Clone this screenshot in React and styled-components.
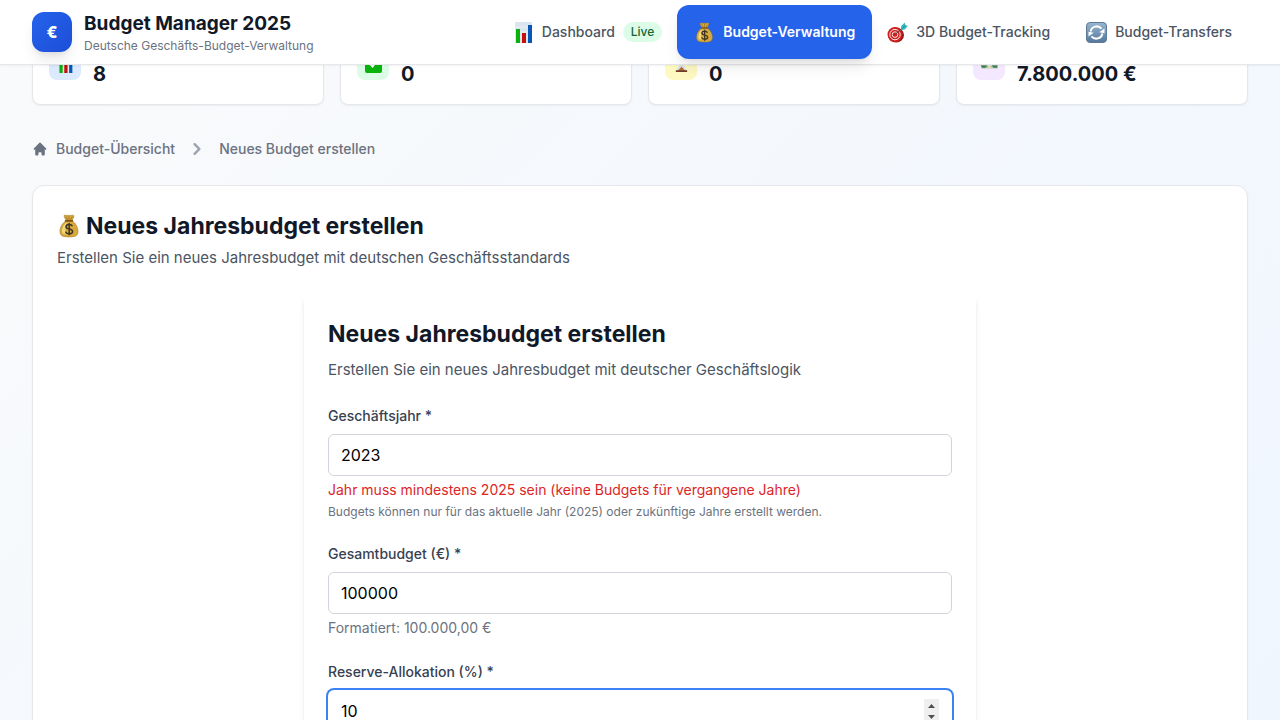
import React, { useEffect, useRef, useState } from "react";
import styled, { createGlobalStyle, css } from "styled-components";

const GlobalStyle = createGlobalStyle`
  *, *::before, *::after { box-sizing: border-box; }
  html { scrollbar-width: none; }
  body {
    margin: 0;
    font-family: Inter, "Liberation Sans", sans-serif;
    font-size: 16px;
    line-height: 24px;
    color: #111827;
    background: #f8fafc;
    -webkit-font-smoothing: antialiased;
  }
  h1, h2, p { margin: 0; }
  a { color: inherit; text-decoration: none; }
`;

const Page = styled.div`
  min-height: 100vh;
  background: linear-gradient(135deg, #f9fafb 0%, #eff6ff 100%);
`;

const Header = styled.header`
  position: sticky;
  top: 0;
  z-index: 10;
  display: flex;
  align-items: center;
  justify-content: space-between;
  height: 65px;
  padding: 0 32px;
  background: #fff;
  border-bottom: 1px solid #e5e7eb;
  box-shadow: 0 1px 2px rgba(0, 0, 0, 0.05);
`;

const Brand = styled.a`
  display: flex;
  align-items: center;
  gap: 12px;
`;

const Logo = styled.span`
  display: flex;
  align-items: center;
  justify-content: center;
  width: 40px;
  height: 40px;
  border-radius: 12px;
  background: linear-gradient(135deg, #2563eb, #1d4ed8);
  box-shadow: 0 10px 15px -3px rgba(0, 0, 0, 0.1), 0 4px 6px -4px rgba(0, 0, 0, 0.1);
  color: #fff;
  font-size: 16px;
  font-weight: 800;
`;

const BrandName = styled.h1`
  font-size: 19px;
  line-height: 28px;
  font-weight: 700;
`;

const BrandNote = styled.p`
  font-size: 12px;
  line-height: 16px;
  color: #6b7280;
`;

const Nav = styled.nav`
  display: flex;
  align-items: center;
  gap: 4px;
`;

const NavLink = styled.a`
  display: flex;
  align-items: center;
  gap: 8px;
  height: 52px;
  padding: 0 16px;
  border-radius: 12px;
  color: #4b5563;
  font-size: 14px;
  font-weight: 500;
  white-space: nowrap;
  svg { width: 21px; height: 21px; }
  ${(p) => p.$active && css`
    height: 54px;
    margin: 0 -5px;
    padding: 0 17px;
    background: #2563eb;
    color: #fff;
    font-weight: 600;
    box-shadow: 0 10px 15px -3px rgba(0, 0, 0, 0.1), 0 4px 6px -4px rgba(0, 0, 0, 0.1);
  `}
`;

const LiveBadge = styled.span`
  padding: 2px 8px;
  border-radius: 10px;
  background: #dcfce7;
  color: #166534;
  font-size: 12px;
  line-height: 16px;
`;

const Main = styled.main`
  margin-top: -42px;
  padding: 0 32px 32px;
`;

const Stats = styled.section`
  display: grid;
  grid-template-columns: repeat(4, 1fr);
  gap: 16px;
`;

const StatCard = styled.div`
  display: flex;
  align-items: center;
  gap: 12px;
  height: 82px;
  padding: 16px;
  border: 1px solid #e5e7eb;
  border-radius: 8px;
  background: #fff;
  box-shadow: 0 1px 2px rgba(0, 0, 0, 0.05);
`;

const StatIcon = styled.span`
  display: flex;
  align-items: center;
  justify-content: center;
  width: 32px;
  height: 32px;
  border-radius: 8px;
  background: ${(p) => p.$tint};
  svg { width: 17px; height: 17px; }
`;

const StatValue = styled.strong`
  align-self: flex-end;
  font-size: 20px;
  line-height: 28px;
  font-weight: 700;
`;

const Breadcrumb = styled.nav`
  display: flex;
  align-items: center;
  margin: 32px 0 24px;
  font-size: 14px;
  line-height: 20px;
  font-weight: 500;
  color: #6b7280;
`;

const Crumb = styled.a`
  display: flex;
  align-items: center;
  gap: 8px;
`;

const Separator = styled.svg`
  width: 24px;
  height: 24px;
  margin: 0 10px;
  color: #9ca3af;
`;

const Panel = styled.section`
  padding: 24px;
  border: 1px solid #e5e7eb;
  border-radius: 12px;
  background: #fff;
  box-shadow: 0 1px 2px rgba(0, 0, 0, 0.05);
`;

const Heading = styled.h2`
  display: flex;
  align-items: center;
  gap: 5px;
  font-size: 23px;
  line-height: 32px;
  font-weight: 700;
  svg { width: 24px; height: 24px; }
`;

const Lead = styled.p`
  margin-top: ${(p) => p.$gap}px;
  font-size: 15px;
  color: #4b5563;
`;

const Form = styled.form`
  display: flex;
  flex-direction: column;
  gap: 24px;
  max-width: 672px;
  margin: 24px auto 0;
  padding: 24px;
  border-radius: 8px;
  background: #fff;
  box-shadow: 0 4px 6px -1px rgba(0, 0, 0, 0.1), 0 2px 4px -2px rgba(0, 0, 0, 0.1);
`;

const Field = styled.div`
  display: flex;
  flex-direction: column;
`;

const Label = styled.label`
  margin-bottom: 8px;
  font-size: 14px;
  line-height: 20px;
  font-weight: 500;
  color: #374151;
`;

const Input = styled.input`
  width: 100%;
  height: 42px;
  padding: 8px 12px;
  border: 1px solid #d1d5db;
  border-radius: 6px;
  background: #fff;
  color: #000;
  font: inherit;
  &:focus {
    outline: none;
    border-color: transparent;
    box-shadow: 0 0 0 2px #3b82f6;
  }
  &:focus::-webkit-inner-spin-button {
    appearance: none;
    width: 15px;
    height: 24px;
    opacity: 1;
    background: #efefef url("data:image/svg+xml,%3Csvg xmlns='http://www.w3.org/2000/svg' width='15' height='24'%3E%3Cpath d='M4 9l3.500-4L11 9zM4 16l3.500 4L11 16z' fill='%23505050'/%3E%3C/svg%3E") center no-repeat;
  }
`;

const Message = styled.p`
  margin-top: 4px;
  font-size: 14px;
  line-height: 20px;
  color: ${(p) => (p.$error ? "#dc2626" : "#6b7280")};
`;

const Hint = styled.p`
  margin-top: 4px;
  font-size: 12px;
  line-height: 16px;
  color: #6b7280;
`;

const ChartIcon = () => (
  <svg viewBox="0 0 21 21" aria-hidden="true">
    <path d="M2 0h17v21H2z" fill="#dbe5ef" />
    <path d="M2 5h17M2 10h17M2 15h17" stroke="#e9f0f6" strokeWidth="1" />
    <path d="M3 7h4v14H3z" fill="#0bb20d" />
    <path d="M9 11h4v10H9z" fill="#c4100f" />
    <path d="M15 3h4v18h-4z" fill="#0757b8" />
  </svg>
);

const MoneyBagIcon = () => (
  <svg viewBox="0 0 24 24" aria-hidden="true">
    <path d="M7 1.6c1.4-.9 2.5.2 3.7-.2 1.1-.5 2 .5 3 .1 1.2-.5 2.2-.5 3.3.2-.3 2.3-1.6 3.6-2.1 5 4 2.600 6.300 7 6.100 11.200-.2 3.700-2.500 5-9 5s-8.800-1.300-9-5C2.800 13.600 5 9.300 9.200 6.700 8.700 5.200 7.300 4 7 1.600z" fill="#d8a93c" stroke="#a77b22" strokeWidth=".6" />
    <path d="M5 17c.1-4 2-7.300 5-8.600-1.500 3-2.200 7-1.500 12C6.200 20 5 19 5 17z" fill="#f3d681" />
    <path d="M9 2.500l1.700 4M12 2.200v4.500M15.300 2.500l-1.900 4" stroke="#9a701d" strokeWidth=".8" />
    <path d="M8.600 6.900h6.800" stroke="#7c5517" strokeWidth="1.700" strokeLinecap="round" />
    <path d="M15.400 12.200c-.5-1.200-1.700-1.800-3.200-1.800-1.800 0-3.200.8-3.200 2.300 0 3.300 6.600 1.400 6.600 4.700 0 1.500-1.400 2.400-3.400 2.400-1.800 0-3.200-.8-3.600-2.200M12.200 8.900v12.400" fill="none" stroke="#3e3524" strokeWidth="1.500" />
  </svg>
);

const TargetIcon = () => (
  <svg viewBox="0 0 21 21" aria-hidden="true">
    <ellipse cx="9" cy="13" rx="8" ry="7.600" fill="#951313" />
    <circle cx="8" cy="12.600" r="7.500" fill="#cf201f" />
    <circle cx="8" cy="12.600" r="5.200" fill="none" stroke="#fbe9e7" strokeWidth="1" />
    <circle cx="8" cy="12.600" r="2.800" fill="none" stroke="#fbe9e7" strokeWidth="1" />
    <path d="M8 12.600L17 5" stroke="#6c4a44" strokeWidth="1.200" />
    <path d="M14 8l.2-4L17.700.600l.6 2.700 2.700.4-3.200 3.700z" fill="#36b8bd" />
    <path d="M14.700 7L18.500 3.300" stroke="#167f8a" strokeWidth=".8" />
  </svg>
);

const TransferIcon = () => (
  <svg viewBox="0 0 21 21" aria-hidden="true">
    <defs>
      <linearGradient id="tile" x1="0" y1="0" x2="0" y2="1">
        <stop offset="0" stopColor="#98b6cf" />
        <stop offset="1" stopColor="#54789c" />
      </linearGradient>
    </defs>
    <rect x=".5" y=".5" width="20" height="20" rx="3.500" fill="url(#tile)" stroke="#5b7b99" />
    <path d="M4.600 9.500A6.200 6.200 0 0 1 15.500 6.700M16.400 11.500A6.200 6.200 0 0 1 5.500 14.300" fill="none" stroke="#fff" strokeWidth="2" />
    <path d="M18.500 6.500v4.700l-5.200-1zM2.500 14.500V9.800l5.200 1z" fill="#fff" />
  </svg>
);

const CheckIcon = () => (
  <svg viewBox="0 0 18 18" aria-hidden="true">
    <rect width="18" height="18" rx="2" fill="#08b30c" />
    <path d="M4 7l4 4 6-8" fill="none" stroke="#fff" strokeWidth="2.200" />
  </svg>
);

const HourglassIcon = () => (
  <svg viewBox="0 0 18 18" aria-hidden="true">
    <path d="M4 1h10c0 4-1 6-4 8 3 2 4 4 4 7H4c0-3 1-5 4-7-3-2-4-4-4-8z" fill="#dce5e8" />
    <path d="M5 15.500l4-4 4 4z" fill="#b26a38" />
    <path d="M3 1h12M3 16h12" stroke="#703d25" strokeWidth="2" />
  </svg>
);

const BanknoteIcon = () => (
  <svg viewBox="0 0 18 18" aria-hidden="true">
    <path d="M0 3l16-1 2 11H0z" fill="#77a17e" />
    <path d="M0 12h18v1.500H0z" fill="#c9ded0" />
    <circle cx="9" cy="8.500" r="3" fill="#dfead8" />
    <path d="M1 11.500h4M13 11.500h4" stroke="#417b51" strokeWidth="2" />
    <path d="M7 12h4" stroke="#e8dcae" strokeWidth="2" />
  </svg>
);

const HomeIcon = () => (
  <svg width="16" height="16" viewBox="0 0 20 20" fill="currentColor" aria-hidden="true">
    <path d="M10.707 2.293a1 1 0 00-1.414 0l-7 7a1 1 0 001.414 1.414L4 10.414V17a1 1 0 001 1h2a1 1 0 001-1v-2a1 1 0 011-1h2a1 1 0 011 1v2a1 1 0 001 1h2a1 1 0 001-1v-6.586l.293.293a1 1 0 001.414-1.414l-7-7z" />
  </svg>
);

const links = [
  { label: "Dashboard", Icon: ChartIcon, live: true },
  { label: "Budget-Verwaltung", Icon: MoneyBagIcon, active: true },
  { label: "3D Budget-Tracking", Icon: TargetIcon },
  { label: "Budget-Transfers", Icon: TransferIcon },
];

const stats = [
  { value: "8", tint: "#dbeafe", Icon: ChartIcon },
  { value: "0", tint: "#dcfce7", Icon: CheckIcon },
  { value: "0", tint: "#fef9c3", Icon: HourglassIcon },
  { value: "7.800.000 €", tint: "#f3e8ff", Icon: BanknoteIcon },
];

export default function App() {
  const [year, setYear] = useState("2023");
  const [total, setTotal] = useState("100000");
  const reserve = useRef(null);

  useEffect(() => {
    const field = reserve.current;
    field.focus({ preventScroll: true });
    // Re-entering the value leaves the caret behind the last digit.
    field.value = "";
    field.value = "10";
  }, []);

  return (
    <Page>
      <GlobalStyle />
      <Header>
        <Brand href="#">
          <Logo>€</Logo>
          <div>
            <BrandName>Budget Manager 2025</BrandName>
            <BrandNote>Deutsche Geschäfts-Budget-Verwaltung</BrandNote>
          </div>
        </Brand>
        <Nav>
          {links.map(({ label, Icon, active, live }) => (
            <NavLink key={label} href="#" $active={active}>
              <Icon />
              {label}
              {live && <LiveBadge>Live</LiveBadge>}
            </NavLink>
          ))}
        </Nav>
      </Header>
      <Main>
        <Stats>
          {stats.map(({ value, tint, Icon }) => (
            <StatCard key={tint}>
              <StatIcon $tint={tint}><Icon /></StatIcon>
              <StatValue>{value}</StatValue>
            </StatCard>
          ))}
        </Stats>
        <Breadcrumb>
          <Crumb href="#"><HomeIcon />Budget-Übersicht</Crumb>
          <Separator viewBox="0 0 20 20" fill="currentColor" aria-hidden="true">
            <path fillRule="evenodd" clipRule="evenodd" d="M7.293 14.707a1 1 0 010-1.414L10.586 10 7.293 6.707a1 1 0 011.414-1.414l4 4a1 1 0 010 1.414l-4 4a1 1 0 01-1.414 0z" />
          </Separator>
          <span>Neues Budget erstellen</span>
        </Breadcrumb>
        <Panel>
          <Heading><MoneyBagIcon />Neues Jahresbudget erstellen</Heading>
          <Lead $gap={4}>Erstellen Sie ein neues Jahresbudget mit deutschen Geschäftsstandards</Lead>
          <Form>
            <div>
              <Heading>Neues Jahresbudget erstellen</Heading>
              <Lead $gap={8}>Erstellen Sie ein neues Jahresbudget mit deutscher Geschäftslogik</Lead>
            </div>
            <Field>
              <Label htmlFor="year">Geschäftsjahr *</Label>
              <Input id="year" type="number" value={year} onChange={(e) => setYear(e.target.value)} />
              <Message $error>Jahr muss mindestens 2025 sein (keine Budgets für vergangene Jahre)</Message>
              <Hint>Budgets können nur für das aktuelle Jahr (2025) oder zukünftige Jahre erstellt werden.</Hint>
            </Field>
            <Field>
              <Label htmlFor="total">Gesamtbudget (€) *</Label>
              <Input id="total" type="number" value={total} onChange={(e) => setTotal(e.target.value)} />
              <Message>Formatiert: 100.000,00 €</Message>
            </Field>
            <Field>
              <Label htmlFor="reserve">Reserve-Allokation (%) *</Label>
              <Input id="reserve" ref={reserve} type="number" defaultValue="10" />
            </Field>
          </Form>
        </Panel>
      </Main>
    </Page>
  );
}
